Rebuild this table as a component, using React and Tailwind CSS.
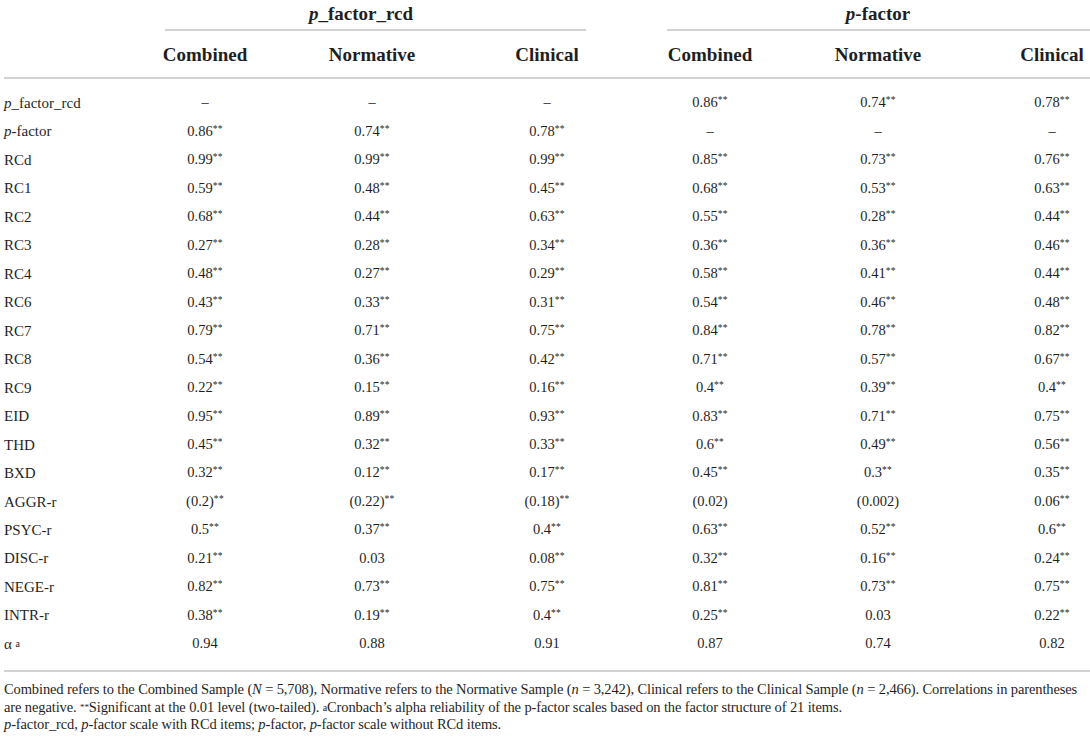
import React from "react";

const rows = [
  [<><i>p</i>_factor_rcd</>, "–", "–", "–", "0.86**", "0.74**", "0.78**"],
  [<><i>p</i>-factor</>, "0.86**", "0.74**", "0.78**", "–", "–", "–"],
  ["RCd", "0.99**", "0.99**", "0.99**", "0.85**", "0.73**", "0.76**"],
  ["RC1", "0.59**", "0.48**", "0.45**", "0.68**", "0.53**", "0.63**"],
  ["RC2", "0.68**", "0.44**", "0.63**", "0.55**", "0.28**", "0.44**"],
  ["RC3", "0.27**", "0.28**", "0.34**", "0.36**", "0.36**", "0.46**"],
  ["RC4", "0.48**", "0.27**", "0.29**", "0.58**", "0.41**", "0.44**"],
  ["RC6", "0.43**", "0.33**", "0.31**", "0.54**", "0.46**", "0.48**"],
  ["RC7", "0.79**", "0.71**", "0.75**", "0.84**", "0.78**", "0.82**"],
  ["RC8", "0.54**", "0.36**", "0.42**", "0.71**", "0.57**", "0.67**"],
  ["RC9", "0.22**", "0.15**", "0.16**", "0.4**", "0.39**", "0.4**"],
  ["EID", "0.95**", "0.89**", "0.93**", "0.83**", "0.71**", "0.75**"],
  ["THD", "0.45**", "0.32**", "0.33**", "0.6**", "0.49**", "0.56**"],
  ["BXD", "0.32**", "0.12**", "0.17**", "0.45**", "0.3**", "0.35**"],
  ["AGGR-r", "(0.2)**", "(0.22)**", "(0.18)**", "(0.02)", "(0.002)", "0.06**"],
  ["PSYC-r", "0.5**", "0.37**", "0.4**", "0.63**", "0.52**", "0.6**"],
  ["DISC-r", "0.21**", "0.03", "0.08**", "0.32**", "0.16**", "0.24**"],
  ["NEGE-r", "0.82**", "0.73**", "0.75**", "0.81**", "0.73**", "0.75**"],
  ["INTR-r", "0.38**", "0.19**", "0.4**", "0.25**", "0.03", "0.22**"],
  [<>α <sup className="text-[10px] relative -top-[2px]">a</sup></>, "0.94", "0.88", "0.91", "0.87", "0.74", "0.82"],
];

const grid = "grid grid-cols-[116px_170px_164px_186px_140px_196px_152px]";

function Val({ v }) {
  const star = v.endsWith("**");
  const base = star ? v.slice(0, -2) : v;
  return (
    <span className="whitespace-nowrap">
      {base}
      {star && <span className="text-[9.5px] relative -top-[4px] tracking-[0.3px]">**</span>}
    </span>
  );
}

export default function App() {
  return (
    <div className="w-[1090px] h-[738px] overflow-hidden bg-white text-[#1f1f1f] pl-1" style={{ fontFamily: '"Liberation Serif", "Times New Roman", serif' }}>
      {/* group titles */}
      <div className={`${grid} h-[29px] items-center text-[19px] font-bold`}>
        <div />
        <div />
        <div className="text-center whitespace-nowrap -translate-x-[11px]"><i>p</i>_factor_rcd</div>
        <div />
        <div />
        <div className="text-center whitespace-nowrap"><i>p</i>-factor</div>
        <div />
      </div>
      <div className={`${grid} h-[2px]`}>
        <div />
        <div className="col-span-3 ml-[45px] mr-[54px] bg-[#d2d2d2]" />
        <div className="col-span-3 ml-[27px] bg-[#d2d2d2]" />
      </div>
      {/* column headers */}
      <div className={`${grid} h-[46px] items-center text-[19px] font-bold pt-[2px]`}>
        <div />
        {["Combined", "Normative", "Clinical", "Combined", "Normative", "Clinical"].map((h, i) => (
          <div key={i} className="text-center">{h}</div>
        ))}
      </div>
      <div className="h-[2px] bg-[#d2d2d2]" />
      <div className="h-[10px]" />
      {rows.map((r, i) => (
        <div key={i} className={`${grid} h-[28.47px] items-center`}>
          <div className="text-[15px] whitespace-nowrap">{r[0]}</div>
          {r.slice(1).map((v, j) => (
            <div key={j} className="text-center text-[14.5px]"><Val v={v} /></div>
          ))}
        </div>
      ))}
      <div className="h-[12px]" />
      <div className="h-[2px] bg-[#d2d2d2]" />
      <div className="pt-[9px] text-[14.5px] leading-[17.5px] tracking-[-0.12px]">
        <div className="whitespace-nowrap">Combined refers to the Combined Sample (<i>N</i> = 5,708), Normative refers to the Normative Sample (<i>n</i> = 3,242), Clinical refers to the Clinical Sample (<i>n</i> = 2,466). Correlations in parentheses</div>
        <div className="whitespace-nowrap">are negative. <sup className="text-[9px] relative -top-[2px]">**</sup>Significant at the 0.01 level (two-tailed). <sup className="text-[10px] relative -top-[1px]">a</sup>Cronbach’s alpha reliability of the p-factor scales based on the factor structure of 21 items.</div>
        <div className="whitespace-nowrap"><i>p</i>-factor_rcd, <i>p</i>-factor scale with RCd items; <i>p</i>-factor, <i>p</i>-factor scale without RCd items.</div>
      </div>
    </div>
  );
}
